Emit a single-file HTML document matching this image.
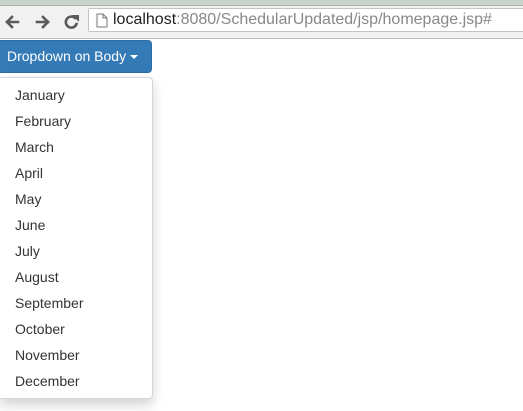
<!DOCTYPE html>
<html><head><style>
body{margin:0;width:523px;height:411px;overflow:hidden;background:#fff;font-family:"Liberation Sans",Arial,sans-serif;position:relative}
.tabs{position:absolute;left:0;top:0;width:523px;height:5px;background:#c9d3cc;border-bottom:1px solid #a9b3ad}
.bar{position:absolute;left:0;top:6px;width:523px;height:32px;background:#f1f1f1;border-bottom:1px solid #b8b8b8}
.url{position:absolute;left:88px;top:8px;width:445px;height:24px;background:#fff;border:1px solid #c3c3c3;border-radius:2px;box-sizing:border-box;font-size:16px;line-height:22px;color:#888;white-space:nowrap}
.url b{font-weight:normal;color:#222}
.btn{position:absolute;left:0;top:40px;width:152px;height:33px;background:#337ab7;border:1px solid #2e6da4;border-left:none;border-radius:0 4px 4px 0;box-sizing:border-box;color:#fff;font-size:14px;line-height:31px;padding-left:7px}
.caret{display:inline-block;width:0;height:0;border-left:4px solid transparent;border-right:4px solid transparent;border-top:4px solid #fff;vertical-align:middle;margin-left:4px}
.menu{position:absolute;left:0;top:77px;width:153px;height:322px;background:#fff;border:1px solid #d5d5d5;border-left:none;border-radius:0 4px 4px 0;box-shadow:0 6px 12px rgba(0,0,0,.175);box-sizing:border-box;padding-top:4px}
.menu div{height:26px;line-height:26px;font-size:14px;color:#333;padding-left:15px}
</style></head><body>
<div class="tabs"></div>
<div class="bar">
<svg style="position:absolute;left:4px;top:7px" width="80" height="18" viewBox="0 0 80 18">
<g fill="none" stroke="#5a5a5a" stroke-width="2.6" stroke-linecap="square">
<path d="M3 9h11M8 4L3 9l5 5"/>
<path d="M33 9h11M39 4l5 5-5 5"/>
<path d="M71 5a5.5 5.5 0 1 0 1.5 6"/>
</g>
<path d="M68 2h7v7z" fill="#5a5a5a"/>
</svg>
</div>
<div class="url"><svg style="position:absolute;left:7px;top:4px" width="12" height="15" viewBox="0 0 12 15"><path d="M1 1h6l4 4v9H1z M7 1v4h4" fill="#fff" stroke="#777"/></svg><span style="position:absolute;left:24px;top:0">
<b>localhost</b>:8080/SchedularUpdated/jsp/homepage.jsp#</span></div>
<div class="btn">Dropdown on Body<span class="caret"></span></div>
<div class="menu">
<div>January</div><div>February</div><div>March</div><div>April</div><div>May</div><div>June</div><div>July</div><div>August</div><div>September</div><div>October</div><div>November</div><div>December</div>
</div>
</body></html>
